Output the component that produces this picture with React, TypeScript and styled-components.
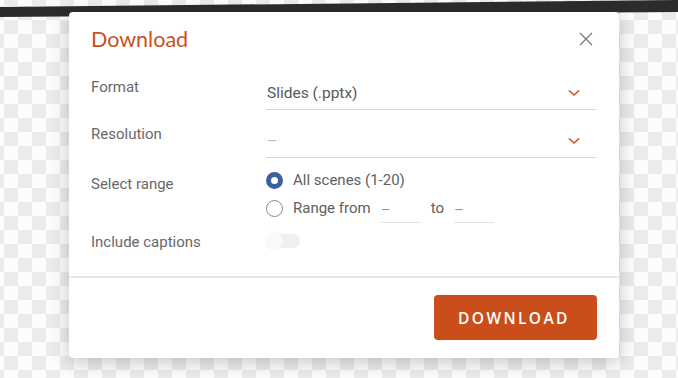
import { createGlobalStyle } from 'styled-components'
import styled from 'styled-components'

const GlobalStyle = createGlobalStyle`
  html, body {
    margin: 0;
    padding: 0;
  }
  body {
    font-family: Roboto, 'Liberation Sans', sans-serif;
    overflow: hidden;
  }
`

const Page = styled.div`
  position: relative;
  width: 678px;
  height: 378px;
  overflow: hidden;
  background-color: #fcfcfc;
  background-image:
    linear-gradient(45deg, #ebebeb 25%, transparent 25%, transparent 75%, #ebebeb 75%),
    linear-gradient(45deg, #ebebeb 25%, transparent 25%, transparent 75%, #ebebeb 75%);
  background-size: 28px 28px;
  background-position: 4px 6px, 18px 20px;
  padding-top: 12px;
  box-sizing: border-box;
`

const Strip = styled.svg`
  position: absolute;
  left: 0;
  top: 0;
`

const Modal = styled.div`
  position: relative;
  margin-left: 69px;
  width: 550px;
  height: 346px;
  background: #fff;
  border-radius: 4px;
  box-shadow: 0 4px 18px rgba(0, 0, 0, 0.22);
  display: flex;
  flex-direction: column;
`

const Header = styled.div`
  display: flex;
  align-items: center;
  justify-content: space-between;
  height: 54px;
  padding: 0 26px 4px 22px;
`

const Title = styled.h2`
  margin: 0;
  font-family: Lato, 'Open Sans', sans-serif;
  font-size: 21.5px;
  font-weight: 400;
  color: #c9511d;
`

const Close = styled.button`
  border: 0;
  background: none;
  padding: 0;
  width: 14px;
  height: 14px;
  display: flex;
  cursor: pointer;
`

const Body = styled.div`
  flex: 1;
  display: grid;
  grid-template-columns: 175px 1fr;
  padding: 6px 23px 0 22px;
  align-content: start;
`

const Label = styled.div<{ $top: number }>`
  font-size: 15px;
  color: #686868;
  padding-top: ${(p) => p.$top}px;
  line-height: 18px;
`

const Select = styled.div<{ $empty?: boolean; $gap: number }>`
  display: flex;
  align-items: center;
  justify-content: space-between;
  height: 33px;
  padding: 0 16px 0 1px;
  border-bottom: 1px solid #d3d8dc;
  font-size: 15.5px;
  color: ${(p) => (p.$empty ? '#b8b8b8' : '#5a5a5a')};
  margin-bottom: ${(p) => p.$gap}px;
`

const Radios = styled.div`
  display: flex;
  flex-direction: column;
  gap: 6px;
  padding-top: 1px;
`

const RadioRow = styled.div`
  display: flex;
  align-items: center;
  height: 22px;
  font-size: 15px;
  color: #606060;
`

const Radio = styled.span<{ $on?: boolean }>`
  box-sizing: border-box;
  width: 17px;
  height: 17px;
  border-radius: 50%;
  margin-right: 10px;
  border: ${(p) => (p.$on ? '5px solid #3e5f9e' : '1px solid #888')};
  background: #fff;
`

const SmallInput = styled.span`
  display: inline-flex;
  align-items: center;
  width: 40px;
  height: 22px;
  border-bottom: 1px solid #e2e5e8;
  margin: 8px 10px 0 10px;
  padding-bottom: 4px;
  font-size: 15px;
  color: #999;
  box-sizing: border-box;
`

const ToggleCell = styled.div`
  padding-top: 12px;
`

const Toggle = styled.span`
  position: relative;
  display: block;
  width: 34px;
  height: 14px;
  margin-top: 3px;
  border-radius: 7px;
  background: #f0f0f0;

  &::after {
    content: '';
    position: absolute;
    left: -1px;
    top: -2px;
    width: 18px;
    height: 18px;
    border-radius: 50%;
    background: #fafafa;
    box-shadow: 0 0 1px rgba(0, 0, 0, 0.08);
  }
`

const Footer = styled.div`
  display: flex;
  justify-content: flex-end;
  border-top: 2px solid #e6e6e6;
  padding: 17px 22px 18px 0;
`

const Button = styled.button`
  width: 163px;
  height: 45px;
  border: 0;
  border-radius: 4px;
  background: #c94e19;
  color: #fff;
  font-family: 'Open Sans', sans-serif;
  font-weight: 600;
  font-size: 15.5px;
  letter-spacing: 2.4px;
  padding-left: 3px;
  cursor: pointer;
`

const Chevron = () => (
  <svg width="12" height="8" viewBox="0 0 12 8">
    <path d="M1 1.5l5 4.5 5-4.5" fill="none" stroke="#c9511d" strokeWidth="1.6" />
  </svg>
)

const App = () => {
  return (
    <Page>
      <GlobalStyle />
      <Strip width="678" height="24" viewBox="0 0 678 24">
        <polygon points="0,7 678,0 678,12 0,17" fill="#2c2c2c" />
      </Strip>
      <Modal>
        <Header>
          <Title>Download</Title>
          <Close aria-label="Close">
            <svg width="14" height="14" viewBox="0 0 14 14">
              <path d="M1 1l12 12M13 1L1 13" stroke="#777" strokeWidth="1.2" />
            </svg>
          </Close>
        </Header>

        <Body>
          <Label $top={2}>Format</Label>
          <Select $gap={14}>
            Slides (.pptx)
            <Chevron />
          </Select>

          <Label $top={1}>Resolution</Label>
          <Select $empty $gap={10}>
            –
            <Chevron />
          </Select>

          <Label $top={7}>Select range</Label>
          <Radios>
            <RadioRow>
              <Radio $on />
              All scenes (1-20)
            </RadioRow>
            <RadioRow>
              <Radio />
              Range from
              <SmallInput>–</SmallInput>
              to
              <SmallInput>–</SmallInput>
            </RadioRow>
          </Radios>

          <Label $top={14}>Include captions</Label>
          <ToggleCell>
            <Toggle />
          </ToggleCell>
        </Body>

        <Footer>
          <Button>DOWNLOAD</Button>
        </Footer>
      </Modal>
    </Page>
  )
}

export default App
